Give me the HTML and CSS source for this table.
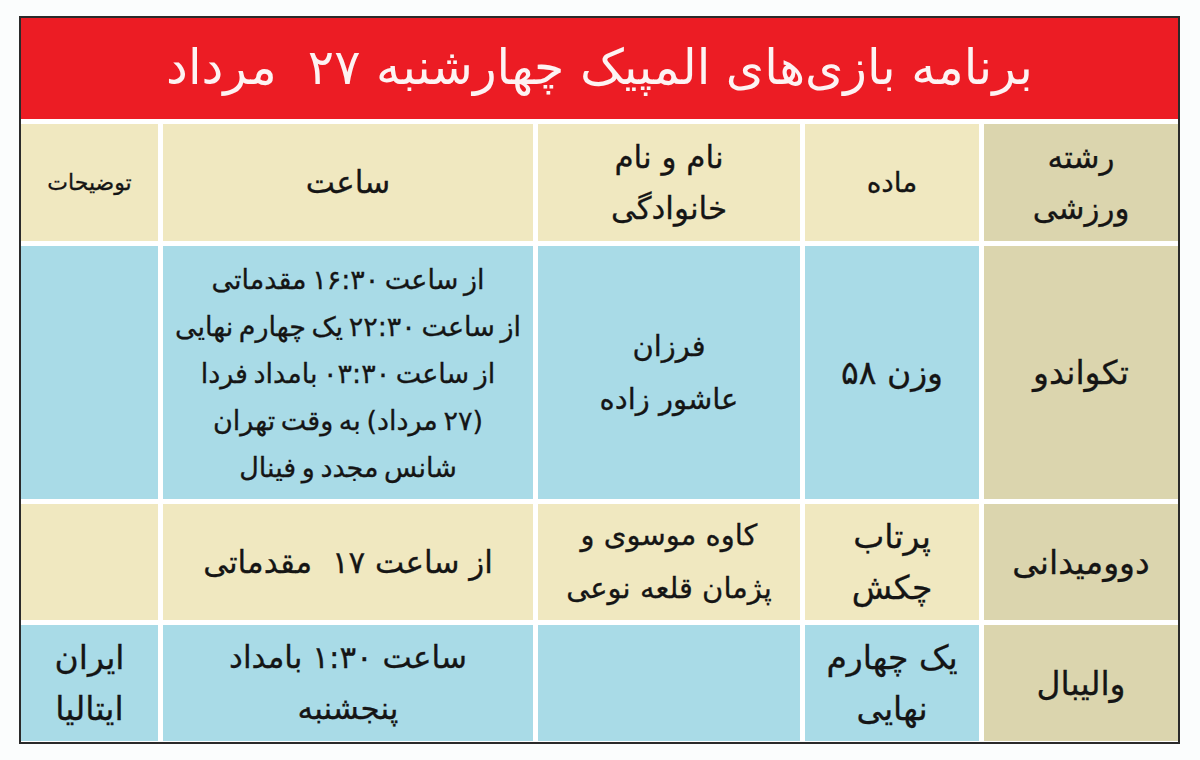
FILE: index.html
```html
<!DOCTYPE html>
<html lang="fa" dir="rtl">
<head>
<meta charset="utf-8">
<title>برنامه بازی‌های المپیک</title>
<link rel="stylesheet" href="styles.css">
</head>
<body>
<div class="board">
  <div class="title">برنامه بازی‌های المپیک چهارشنبه ۲۷&nbsp; مرداد</div>

  <div class="cell tan">رشته<br>ورزشی</div>
  <div class="cell beige hsm">ماده</div>
  <div class="cell beige">نام و نام<br>خانوادگی</div>
  <div class="cell beige">ساعت</div>
  <div class="cell beige small">توضیحات</div>

  <div class="cell tan big">تکواندو</div>
  <div class="cell blue big">وزن ۵۸</div>
  <div class="cell blue name">فرزان<br>عاشور زاده</div>
  <div class="cell blue lines">از ساعت ۱۶:۳۰ مقدماتی<br>از ساعت ۲۲:۳۰ یک چهارم نهایی<br>از ساعت ۰۳:۳۰ بامداد فردا<br>(۲۷ مرداد) به وقت تهران<br>شانس مجدد و فینال</div>
  <div class="cell blue"></div>

  <div class="cell tan big">دوومیدانی</div>
  <div class="cell beige big">پرتاب<br>چکش</div>
  <div class="cell beige name">کاوه موسوی و<br>پژمان قلعه نوعی</div>
  <div class="cell beige">از ساعت ۱۷&nbsp; مقدماتی</div>
  <div class="cell beige"></div>

  <div class="cell tan big">والیبال</div>
  <div class="cell blue big">یک چهارم<br>نهایی</div>
  <div class="cell blue"></div>
  <div class="cell blue">ساعت ۱:۳۰ بامداد<br>پنجشنبه</div>
  <div class="cell blue big">ایران<br>ایتالیا</div>
</div>
</body>
</html>
```

FILE: styles.css
```css
html, body {
  margin: 0;
  padding: 0;
  background: #fbfdfd;
}

body {
  width: 1200px;
  height: 760px;
  padding: 16px 20px 0 19px;
  box-sizing: border-box;
  font-family: "DejaVu Sans", "Noto Sans", sans-serif;
}

.board {
  width: 1161px;
  height: 728px;
  box-sizing: border-box;
  border: 2px solid #2a2a2a;
  background: #ffffff;
  display: grid;
  direction: rtl;
  grid-template-columns: 194px 174px 262px 370px 137px;
  grid-template-rows: 101px 117px 253px 116px 116px;
  column-gap: 5px;
  row-gap: 5px;
}

.title {
  grid-column: 1 / -1;
  background: #ec1c24;
  color: #fdf3f3;
  font-size: 49px;
  display: flex;
  align-items: center;
  justify-content: center;
  padding-bottom: 2px;
  box-sizing: border-box;
}

.cell {
  display: flex;
  align-items: center;
  justify-content: center;
  text-align: center;
  color: #151515;
  font-size: 31px;
  line-height: 51px;
  white-space: nowrap;
  -webkit-text-stroke: 0.3px #151515;
}

.tan { background: #dbd5ae; }
.beige { background: #f0e8c0; }
.blue { background: #a9dbe7; }

.big {
  font-size: 33px;
}

.hsm {
  font-size: 28px;
}

.name {
  font-size: 29px;
  line-height: 53px;
}

.small {
  font-size: 22px;
}

.lines {
  font-size: 27px;
  line-height: 47px;
  word-spacing: -3px;
  padding-top: 2px;
}
```
